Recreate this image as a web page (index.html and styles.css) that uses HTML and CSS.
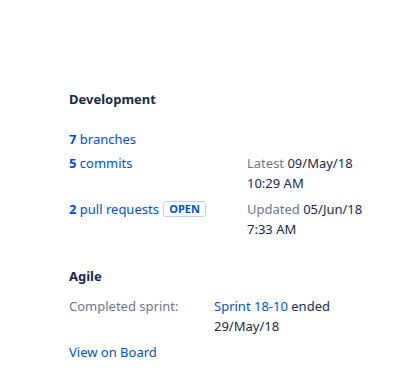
FILE: index.html
```html
<!DOCTYPE html>
<html lang="en">
<head>
  <meta charset="UTF-8">
  <title>Issue panel</title>
  <link rel="stylesheet" href="styles.css">
</head>
<body>
  <div class="panel">
    <section class="module">
      <h4>Development</h4>
      <div class="dev-rows">
        <div class="dev-row">
          <a href="#" class="item"><b>7</b> branches</a>
        </div>
        <div class="dev-row">
          <a href="#" class="item"><b>5</b> commits</a>
          <div class="meta">Latest <span class="dark">09/May/18 10:29 AM</span></div>
        </div>
        <div class="dev-row pr-row">
          <div class="item"><a href="#"><b>2</b> pull requests</a> <span class="lozenge">OPEN</span></div>
          <div class="meta">Updated <span class="dark">05/Jun/18 7:33 AM</span></div>
        </div>
      </div>
    </section>
    <section class="module">
      <h4 class="agile-title">Agile</h4>
      <div class="agile-row">
        <div class="label">Completed sprint:</div>
        <div class="value"><a href="#">Sprint 18-10</a> ended 29/May/18</div>
      </div>
      <a href="#" class="board-link">View on Board</a>
    </section>
  </div>
</body>
</html>
```

FILE: styles.css
```css
body {
  margin: 0;
  font-family: "Noto Sans", "Segoe UI", sans-serif;
  font-size: 13px;
  line-height: 20px;
  color: #172b4d;
  background: #fff;
}
a {
  color: #0052cc;
  text-decoration: none;
}
.panel {
  padding: 89px 20px 0 69px;
  width: 310px;
}
.module {
  margin-bottom: 27px;
}
h4 {
  margin: 0 0 20px;
  font-size: 13px;
  font-weight: 700;
  line-height: 20px;
}
.agile-title {
  margin-bottom: 10px;
}
.dev-rows {
  display: flex;
  flex-direction: column;
  gap: 4px;
}
.dev-row {
  display: flex;
}
.pr-row {
  margin-top: 2px;
}
.item {
  width: 178px;
}
.item b {
  font-weight: 700;
}
.meta {
  width: 130px;
  color: #6b778c;
}
.meta .dark {
  color: #172b4d;
}
.lozenge {
  display: inline-block;
  margin-left: 1px;
  border: 1px solid #b3d4ff;
  border-radius: 3px;
  color: #0052cc;
  font-size: 11px;
  font-weight: 700;
  line-height: 14px;
  padding: 0 5px;
  vertical-align: 1px;
}
.agile-row {
  display: flex;
  margin-bottom: 6px;
}
.label {
  width: 145px;
  color: #6b778c;
}
.value {
  width: 150px;
}
```
